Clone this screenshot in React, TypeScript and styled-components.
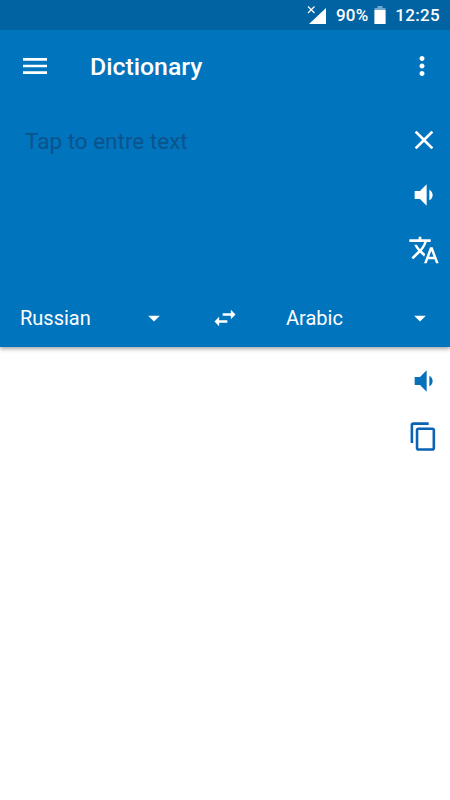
import React from 'react'
import styled, { createGlobalStyle } from 'styled-components'

const paths = {
  menu: 'M3 18h18v-2H3v2zm0-5h18v-2H3v2zm0-7v2h18V6H3z',
  more: 'M12 8c1.1 0 2-.9 2-2s-.9-2-2-2-2 .9-2 2 .9 2 2 2zm0 2c-1.1 0-2 .9-2 2s.9 2 2 2 2-.9 2-2-.9-2-2-2zm0 6c-1.1 0-2 .9-2 2s.9 2 2 2 2-.9 2-2-.9-2-2-2z',
  close: 'M19 6.41 17.59 5 12 10.59 6.41 5 5 6.41 10.59 12 5 17.59 6.41 19 12 13.41 17.59 19 19 17.59 13.41 12z',
  volume: 'M18.5 12c0-1.77-1.02-3.29-2.5-4.03v8.05c1.48-.73 2.5-2.25 2.5-4.02zM5 9v6h4l5 5V4L9 9H5z',
  translate:
    'M12.87 15.07l-2.54-2.51.03-.03c1.74-1.94 2.98-4.17 3.71-6.53H17V4h-7V2H8v2H1v1.99h11.17C11.5 7.92 10.44 9.75 9 11.35 8.07 10.32 7.3 9.19 6.69 8h-2c.73 1.63 1.73 3.17 2.98 4.56l-5.09 5.02L4 19l5-5 3.11 3.11.76-2.04zM18.5 10h-2L12 22h2l1.12-3h4.75L21 22h2l-4.5-12zm-2.62 7l1.62-4.33L19.12 17h-3.24z',
  swap: 'M6.99 11L3 15l3.99 4v-3H14v-2H6.99v-3zM21 9l-3.99-4v3H10v2h7.01v3L21 9z',
  copy: 'M16 1H4c-1.1 0-2 .9-2 2v14h2V3h12V1zm3 4H8c-1.1 0-2 .9-2 2v14c0 1.1.9 2 2 2h11c1.1 0 2-.9 2-2V7c0-1.1-.9-2-2-2zm0 16H8V7h11v14z',
  drop: 'M7 10l5 5 5-5z',
}

type IconProps = { name: keyof typeof paths; size?: number; color?: string }

const Icon = ({ name, size = 32, color = '#fff' }: IconProps): React.ReactElement => (
  <IconSvg viewBox="0 0 24 24" width={size} height={size} fill={color}>
    <path d={paths[name]} />
  </IconSvg>
)

export default function App(): React.ReactElement {
  return (
    <>
      <GlobalStyle />
      <Page>
        <BluePanel>
          <StatusBar>
            <SignalIcon viewBox="0 0 20 20" width="20" height="20">
              <path d="M19 3v16H2z" fill="#fff" />
              <path d="M1 1.5l6.5 6.5m0-6.5L1 8" stroke="#fff" strokeWidth="1.2" fill="none" />
            </SignalIcon>
            <StatusText>90%</StatusText>
            <BatteryIcon viewBox="0 0 12 18" width="12" height="18">
              <path d="M3.5 0h5v2h-5z" fill="#6fa8d0" />
              <path d="M.5 2h11v16H.5z" fill="#6fa8d0" />
              <path d="M.5 4h11v14H.5z" fill="#fff" />
            </BatteryIcon>
            <Clock>12:25</Clock>
          </StatusBar>

          <AppBar>
            <MenuSlot>
              <Icon name="menu" />
            </MenuSlot>
            <Title>Dictionary</Title>
            <MoreSlot>
              <Icon name="more" size={30} />
            </MoreSlot>
          </AppBar>

          <InputArea>
            <Placeholder>Tap to entre text</Placeholder>
            <ActionColumn>
              <ActionSlot>
                <Icon name="close" />
              </ActionSlot>
              <ActionSlot>
                <Icon name="volume" />
              </ActionSlot>
              <ActionSlot>
                <Icon name="translate" />
              </ActionSlot>
            </ActionColumn>
          </InputArea>

          <LanguageRow>
            <LanguageGroup>
              <Language>Russian</Language>
              <Icon name="drop" size={28} />
            </LanguageGroup>
            <SwapSlot>
              <Icon name="swap" size={28} />
            </SwapSlot>
            <LanguageGroup>
              <Language>Arabic</Language>
              <Icon name="drop" size={28} />
            </LanguageGroup>
          </LanguageRow>
        </BluePanel>

        <ResultArea>
          <ResultSlot>
            <Icon name="volume" color="#0670bb" />
          </ResultSlot>
          <ResultSlot>
            <Icon name="copy" size={31} color="#0a62b4" />
          </ResultSlot>
        </ResultArea>
      </Page>
    </>
  )
}

const GlobalStyle = createGlobalStyle`
  html, body {
    margin: 0;
    padding: 0;
    background: #fff;
  }
  * {
    box-sizing: border-box;
  }
`

const Page = styled.div`
  width: 450px;
  height: 800px;
  overflow: hidden;
  display: flex;
  flex-direction: column;
  background: #fff;
  font-family: Roboto, 'Liberation Sans', sans-serif;
`

const IconSvg = styled.svg`
  display: block;
  flex: none;
`

const BluePanel = styled.div`
  height: 347px;
  flex: none;
  display: flex;
  flex-direction: column;
  background: #0174be;
  box-shadow: 0 2px 4px rgba(0, 0, 0, 0.35);
  position: relative;
  z-index: 1;
`

const StatusBar = styled.div`
  height: 30px;
  flex: none;
  display: flex;
  align-items: center;
  justify-content: flex-end;
  padding-right: 10px;
  background: #0263a2;
  color: #fff;
`

const SignalIcon = styled.svg`
  display: block;
  flex: none;
  margin-right: 9px;
`

const StatusText = styled.span`
  font-size: 17px;
  font-weight: 500;
  letter-spacing: 0.2px;
  margin-right: 6px;
`

const BatteryIcon = styled.svg`
  display: block;
  flex: none;
  margin-right: 9px;
`

const Clock = styled.span`
  font-size: 17px;
  font-weight: 500;
  letter-spacing: 0.3px;
`

const AppBar = styled.div`
  height: 72px;
  flex: none;
  display: flex;
  align-items: center;
`

const MenuSlot = styled.div`
  width: 32px;
  margin-left: 19px;
  margin-right: 39px;
`

const Title = styled.h1`
  flex: 1;
  margin: 0;
  color: #fff;
  font-size: 24.8px;
  font-weight: 500;
`

const MoreSlot = styled.div`
  width: 30px;
  margin-right: 13px;
`

const InputArea = styled.div`
  flex: 1;
  display: flex;
  justify-content: space-between;
  padding: 22px 10px 0 25px;
`

const Placeholder = styled.div`
  color: #0b538b;
  font-size: 22.5px;
  line-height: 34px;
`

const ActionColumn = styled.div`
  display: flex;
  flex-direction: column;
  gap: 23px;
`

const ActionSlot = styled.div`
  width: 32px;
  height: 32px;
`

const LanguageRow = styled.div`
  height: 58px;
  flex: none;
  display: flex;
  align-items: center;
  padding: 0 16px 0 20px;
`

const LanguageGroup = styled.div`
  flex: 1;
  display: flex;
  align-items: center;
  justify-content: space-between;
`

const Language = styled.span`
  color: #fff;
  font-size: 20px;
`

const SwapSlot = styled.div`
  width: 28px;
  margin: 0 47px 0 43px;
`

const ResultArea = styled.div`
  flex: 1;
  display: flex;
  flex-direction: column;
  align-items: flex-end;
  gap: 24px;
  padding: 18px 10px 0 0;
`

const ResultSlot = styled.div`
  width: 32px;
  height: 32px;
`
